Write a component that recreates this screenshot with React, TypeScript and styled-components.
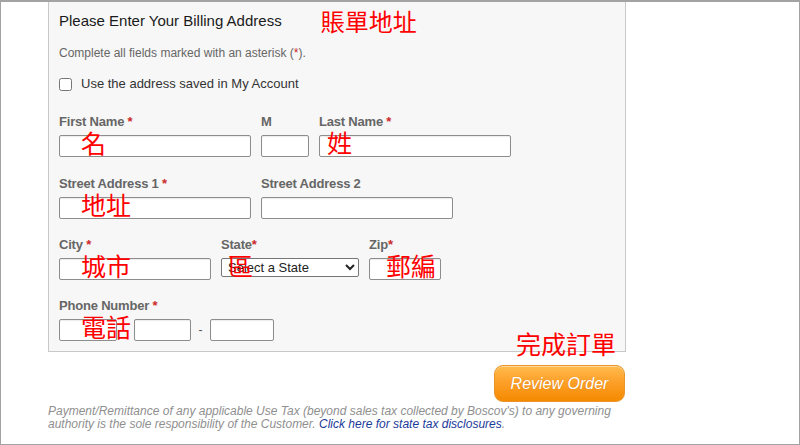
import { FC, ReactNode } from "react";
import styled, { createGlobalStyle } from "styled-components";

const GlobalStyle = createGlobalStyle`
  html, body {
    margin: 0;
    padding: 0;
    background: #ffffff;
  }
  body {
    font-family: Arial, "Liberation Sans", sans-serif;
  }
`;

const Frame = styled.div`
  width: 800px;
  height: 445px;
  box-sizing: border-box;
  border: 1px solid #a3a3a3;
  border-top-width: 2px;
  overflow: hidden;
`;

const Content = styled.div`
  margin-left: 47px;
  width: 578px;
`;

const Panel = styled.div`
  background: #f7f7f7;
  border: 1px solid #c8c8c8;
  border-top: none;
  padding: 9px 10px 10px 10px;
`;

const TitleRow = styled.div`
  display: flex;
  align-items: center;
  height: 20px;
`;

const Title = styled.h2`
  margin: 0;
  font-size: 15px;
  font-weight: normal;
  color: #1a1a1a;
  line-height: 18px;
`;

const Note = styled.span<{ $left?: number; $top?: number }>`
  position: absolute;
  left: ${({ $left }) => $left ?? 22}px;
  top: ${({ $top }) => $top ?? -5}px;
  font-family: "Noto Sans CJK TC", "Noto Sans CJK SC", sans-serif;
  font-size: 25px;
  line-height: 1;
  color: #ff0000;
  white-space: nowrap;
  pointer-events: none;
`;

const InlineNote = styled.span`
  font-family: "Noto Sans CJK TC", "Noto Sans CJK SC", sans-serif;
  font-size: 24px;
  line-height: 1;
  color: #ff0000;
  margin-left: 39px;
`;

const Hint = styled.p`
  margin: 14px 0 0;
  font-size: 12px;
  line-height: 16px;
  color: #666666;
`;

const Star = styled.span`
  color: #cc2a2a;
`;

const CheckRow = styled.label`
  display: flex;
  align-items: center;
  gap: 9px;
  margin-top: 15px;
  font-size: 13px;
  line-height: 16px;
  color: #333333;

  & input {
    margin: 0;
    width: 13px;
    height: 13px;
  }
`;

const FieldRow = styled.div<{ $gap?: number; $top: number }>`
  display: flex;
  align-items: flex-start;
  gap: ${({ $gap }) => $gap ?? 10}px;
  margin-top: ${({ $top }) => $top}px;
`;

const Field = styled.div<{ $width: number }>`
  position: relative;
  display: flex;
  flex-direction: column;
  width: ${({ $width }) => $width}px;
`;

const Label = styled.span`
  font-size: 13px;
  font-weight: bold;
  line-height: 14px;
  color: #666666;
  margin-bottom: 6px;
  white-space: nowrap;
  letter-spacing: -0.2px;
`;

const Box = styled.div`
  position: relative;
`;

const Input = styled.input<{ $width: number; $height?: number }>`
  display: block;
  box-sizing: border-box;
  width: ${({ $width }) => $width}px;
  height: ${({ $height }) => $height ?? 22}px;
  margin: 0;
  border: 1px solid #8d8d8d;
  border-radius: 2px;
  background: #ffffff;
  box-shadow: inset 0 1px 1px rgba(0, 0, 0, 0.08);
  font-size: 13px;
`;

const Select = styled.select`
  display: block;
  box-sizing: border-box;
  width: 138px;
  height: 19px;
  margin: 0;
  padding: 0 2px;
  border: 1px solid #767676;
  border-radius: 2px;
  background: #ffffff;
  font-family: Arial, "Liberation Sans", sans-serif;
  font-size: 13px;
  color: #222222;
`;

const PhoneGroup = styled.div`
  display: flex;
  align-items: center;
`;

const Dash = styled.span`
  width: 19px;
  text-align: center;
  font-size: 12px;
  color: #555555;
`;

const ActionRow = styled.div`
  position: relative;
  display: flex;
  justify-content: flex-end;
  padding-right: 1px;
  margin-top: 13px;
`;

const ReviewButton = styled.button`
  width: 131px;
  height: 37px;
  border: 1px solid #e8962a;
  border-radius: 9px;
  background: linear-gradient(#ffbb4d 0%, #fda02a 45%, #f58a00 100%);
  box-shadow: inset 0 1px 0 rgba(255, 255, 255, 0.45);
  color: #ffffff;
  font-family: Arial, "Liberation Sans", sans-serif;
  font-size: 16px;
  font-style: italic;
  text-shadow: 0 0 1px rgba(150, 80, 0, 0.35);
  cursor: pointer;
`;

const Disclaimer = styled.p`
  margin: 3px 0 0;
  font-size: 12px;
  font-style: italic;
  line-height: 13px;
  color: #8f8f8f;

  & a {
    color: #1a3a99;
    text-decoration: none;
  }
`;

interface IFieldProps {
  label: ReactNode;
  width: number;
  note?: string;
  noteLeft?: number;
  children: ReactNode;
}

const FormField: FC<IFieldProps> = ({ label, width, note, noteLeft, children }) => (
  <Field $width={width}>
    <Label>{label}</Label>
    <Box>
      {children}
      {note && <Note $left={noteLeft}>{note}</Note>}
    </Box>
  </Field>
);

const Req = () => <Star> *</Star>;

export default function App() {
  return (
    <>
      <GlobalStyle />
      <Frame>
        <Content>
          <Panel>
            <TitleRow>
              <Title>Please Enter Your Billing Address</Title>
              <InlineNote>賬單地址</InlineNote>
            </TitleRow>
            <Hint>
              Complete all fields marked with an asterisk (<Star>*</Star>).
            </Hint>
            <CheckRow>
              <input type="checkbox" />
              Use the address saved in My Account
            </CheckRow>

            <FieldRow $top={23}>
              <FormField label={<>First Name<Req /></>} width={192} note="名">
                <Input $width={192} />
              </FormField>
              <FormField label="M" width={48}>
                <Input $width={48} />
              </FormField>
              <FormField label={<>Last Name<Req /></>} width={192} note="姓" noteLeft={8}>
                <Input $width={192} />
              </FormField>
            </FieldRow>

            <FieldRow $top={20}>
              <FormField label={<>Street Address 1<Req /></>} width={192} note="地址">
                <Input $width={192} />
              </FormField>
              <FormField label="Street Address 2" width={192}>
                <Input $width={192} />
              </FormField>
            </FieldRow>

            <FieldRow $top={19}>
              <FormField label={<>City<Req /></>} width={152} note="城市">
                <Input $width={152} />
              </FormField>
              <FormField label={<>State<Star>*</Star></>} width={138} note="區" noteLeft={7}>
                <Select defaultValue="">
                  <option value="">Select a State</option>
                </Select>
              </FormField>
              <FormField label={<>Zip<Star>*</Star></>} width={72} note="郵編" noteLeft={17}>
                <Input $width={72} />
              </FormField>
            </FieldRow>

            <FieldRow $top={19}>
              <FormField label={<>Phone Number<Req /></>} width={220} note="電話">
                <PhoneGroup>
                  <Input $width={58} style={{ marginRight: 17 }} />
                  <Input $width={57} />
                  <Dash>-</Dash>
                  <Input $width={64} />
                </PhoneGroup>
              </FormField>
            </FieldRow>
          </Panel>

          <ActionRow>
            <Note $left={468} $top={-34}>完成訂單</Note>
            <ReviewButton>Review Order</ReviewButton>
          </ActionRow>

          <Disclaimer>
            Payment/Remittance of any applicable Use Tax (beyond sales tax collected by Boscov's) to any governing
            authority is the sole responsibility of the Customer.{" "}
            <a href="#">Click here for state tax disclosures</a>.
          </Disclaimer>
        </Content>
      </Frame>
    </>
  );
}
